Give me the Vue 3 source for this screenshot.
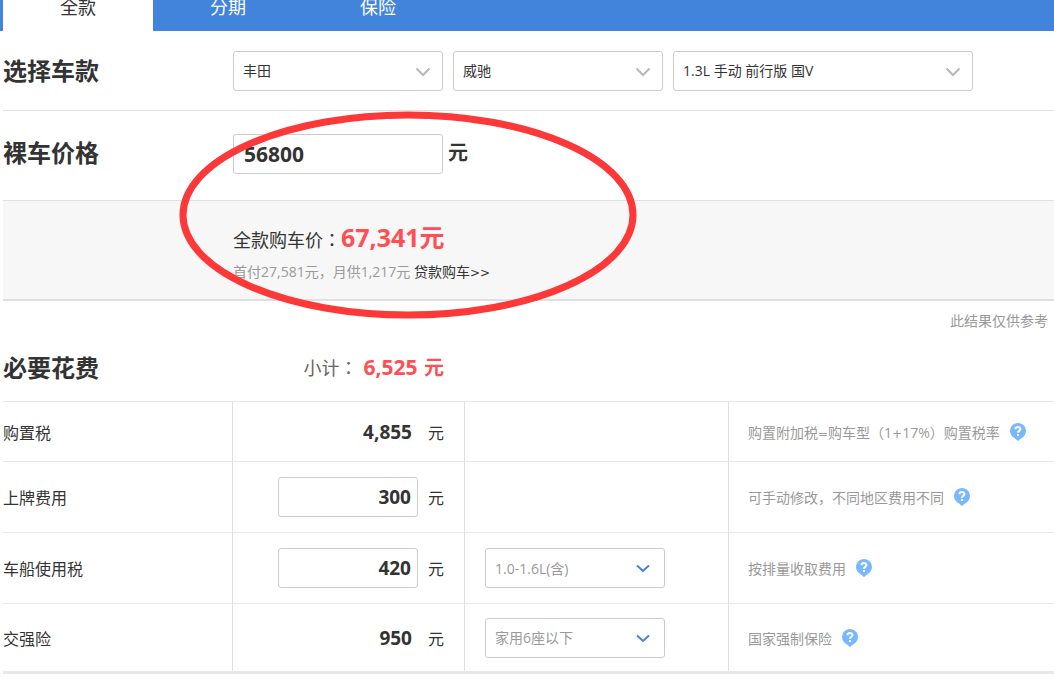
<script setup>
import { ref } from 'vue'

const tabs = ['全款', '分期', '保险']
const models = [
  { id: 'brand', label: '品牌', value: '丰田' },
  { id: 'series', label: '车系', value: '威驰' },
  { id: 'trim', label: '车型', value: '1.3L 手动 前行版 国V', wide: true }
]
const price = ref('56800')
const fees = ref([
  { id: 'purchase', name: '购置税', amount: '4,855', parts: ['购置附加税', '=', '购车型（1', '+', '17%）购置税率'], size: 'short' },
  { id: 'plate', name: '上牌费用', amount: '300', editable: true, parts: ['可手动修改，不同地区费用不同'], size: 'tall' },
  { id: 'vessel', name: '车船使用税', amount: '420', editable: true, option: '1.0-1.6L(含)', parts: ['按排量收取费用'], size: 'tall' },
  { id: 'compulsory', name: '交强险', amount: '950', option: '家用6座以下', parts: ['国家强制保险'], size: 'last' }
])
</script>

<template>
  <main class="page">
    <nav class="tabs">
      <button v-for="(tab, i) in tabs" :key="tab" type="button" class="tab" :class="{ active: i === 0 }">{{ tab }}</button>
    </nav>

    <div class="content">
      <section class="row models">
        <h2 class="title">选择车款</h2>
        <div class="picks">
          <div v-for="m in models" :key="m.id" class="pick" :class="{ wide: m.wide }">
            <select :id="m.id" class="box" :aria-label="m.label"><option>{{ m.value }}</option></select>
            <svg class="arrow" width="16" height="10" viewBox="0 0 16 10"><path d="M1.5 1.5 L8 8 L14.5 1.5" /></svg>
          </div>
        </div>
      </section>

      <section class="row bare">
        <h2 class="title"><label for="price">裸车价格</label></h2>
        <input id="price" v-model="price" class="box price" type="text">
        <span class="price-unit">元</span>
      </section>

      <section class="summary">
        <p class="total">全款购车价<span class="mark">：</span><strong>67,341元</strong></p>
        <p class="loan">首付27,581元，月供1,217元 <a href="#">贷款购车<span class="sign">&gt;&gt;</span></a></p>
      </section>

      <p class="note">此结果仅供参考</p>

      <section class="needed">
        <h2 class="title">必要花费</h2>
        <p class="subtotal">小计<span class="mark">：</span><strong>6,525 <span class="cjk">元</span></strong></p>
      </section>

      <table class="fees">
        <colgroup><col class="c-name"><col class="c-amount"><col class="c-option"><col></colgroup>
        <tbody>
          <tr v-for="f in fees" :key="f.id" :class="f.size">
            <th scope="row"><label v-if="f.editable" :for="f.id">{{ f.name }}</label><template v-else>{{ f.name }}</template></th>
            <td>
              <div class="amount">
                <input v-if="f.editable" :id="f.id" v-model="f.amount" class="box fee" type="text">
                <span v-else class="value">{{ f.amount }}</span>
                <span>元</span>
              </div>
            </td>
            <td>
              <div v-if="f.option" class="pick option">
                <select class="box" :aria-label="f.name"><option>{{ f.option }}</option></select>
                <svg class="arrow" width="14" height="10" viewBox="0 0 14 10"><path d="M1 1.5 L7 7 L13 1.5" /></svg>
              </div>
            </td>
            <td>
              <div class="hint">
                <span><span v-for="p in f.parts" :key="p" :class="{ sign: p.length === 1 }">{{ p }}</span></span>
                <svg width="16" height="18" viewBox="0 0 16 18">
                  <path fill="#78b8fe" d="M8 0a8 8 0 0 1 3 15.4L8 18l-3-2.6A8 8 0 0 1 8 0z" />
                  <path fill="none" stroke="#fff" stroke-width="2" d="M5.5 6.3C5.5 3.4 10.4 3.4 10.4 6.1C10.4 7.9 8 7.8 8 9.8" />
                  <path fill="#fff" d="M7 11h2v2H7z" />
                </svg>
              </div>
            </td>
          </tr>
        </tbody>
      </table>
    </div>

    <svg class="ring" width="458" height="208" viewBox="0 0 458 208"><ellipse cx="229" cy="104" rx="225" ry="100" /></svg>
  </main>
</template>

<style>
body { background: #fff; }
</style>

<style scoped>
.page {
  position: relative;
  overflow: hidden;
  color: #333;
  font-family: "Open Sans", "Noto Sans CJK SC", sans-serif;
  font-size: 16px;
}
.page * { box-sizing: border-box; }
.mark { font-family: "Noto Sans CJK TC", sans-serif; }
.sign { font-family: "DejaVu Sans", sans-serif; font-size: 12px; }
h2, p { margin: 0; }
button, input, select { font-family: inherit; color: inherit; }
.tabs { display: flex; height: 31px; padding-left: 3px; background: #4284db; }
.tab {
  width: 150px;
  padding: 0 0 16px;
  border: 0;
  background: none;
  color: #fff;
  font-size: 18px;
  line-height: 15px;
}
.tab.active { background: #fff; color: #333; }
.content { padding-left: 3px; }
.row { display: flex; align-items: center; border-bottom: 1px solid #e0e0e0; }
.models { height: 80px; }
.bare { height: 90px; padding-bottom: 6px; }
.title { width: 230px; flex: none; font-size: 24px; line-height: 32px; font-weight: 700; }
.picks { display: flex; gap: 10px; }
.pick { position: relative; width: 210px; }
.pick.wide { width: 300px; }
.box {
  display: block;
  width: 100%;
  height: 40px;
  padding: 0 10px;
  border: 1px solid #ccc;
  border-radius: 3px;
  background: #fff;
  font-size: 14px;
  appearance: none;
  outline: 0;
}
.arrow {
  position: absolute;
  top: 16px;
  right: 12px;
  fill: none;
  stroke: #b8b8b8;
  stroke-width: 2;
  pointer-events: none;
}
.pick .box { padding-left: 9px; }
.box.price { width: 210px; margin-top: 3px; font-size: 21px; font-weight: 700; }
.price-unit { margin-left: 5px; font-size: 20px; font-weight: 700; line-height: 28px; }
.summary { padding: 18px 0 13px 230px; border-bottom: 2px solid #e0e0e0; background: #f7f7f7; }
.total { height: 39px; font-size: 18px; line-height: 36px; }
.total strong { color: #ff4f55; font-size: 25px; }
.loan { height: 28px; color: #999; font-size: 14px; line-height: 28px; }
.loan a { color: #333; text-decoration: none; }
.note { padding: 10px 6px 0 0; color: #999; font-size: 14px; line-height: 20px; text-align: right; }
.needed { display: flex; align-items: center; height: 70px; padding-top: 3px; }
.subtotal { width: 211px; color: #666; font-size: 18px; line-height: 28px; text-align: right; }
.subtotal strong { margin-left: 6px; color: #ff4f55; font-size: 21px; }
.subtotal .cjk { margin-left: 1px; font-size: 20px; }
.fees { width: 100%; table-layout: fixed; border-spacing: 0; border-bottom: 3px solid #e8e8e8; }
.c-name { width: 230px; }
.c-amount { width: 232px; }
.c-option { width: 264px; }
.fees th, .fees td { padding: 0; border-top: 1px solid #e8e8e8; border-right: 1px solid #e0e0e0; }
.fees td:last-child { border-right: 0; }
.fees th { font-weight: 400; text-align: left; }
.short { height: 60px; }
.tall { height: 71px; }
.last { height: 68px; }
.amount { display: flex; align-items: center; justify-content: flex-end; gap: 10px; padding-right: 20px; }
.value { padding-right: 6px; font-size: 19px; font-weight: 700; }
.box.fee { width: 140px; padding: 0 6px; font-size: 19px; font-weight: 700; text-align: right; }
.option { width: 180px; margin-left: 20px; color: #999; }
.option .arrow { right: 15px; stroke: #4284db; }
.hint { display: flex; align-items: center; gap: 10px; padding-left: 19px; color: #999; font-size: 14px; white-space: nowrap; }
.ring { position: absolute; left: 179px; top: 111px; pointer-events: none; fill: none; stroke: #fc3838; stroke-width: 7; }
</style>
